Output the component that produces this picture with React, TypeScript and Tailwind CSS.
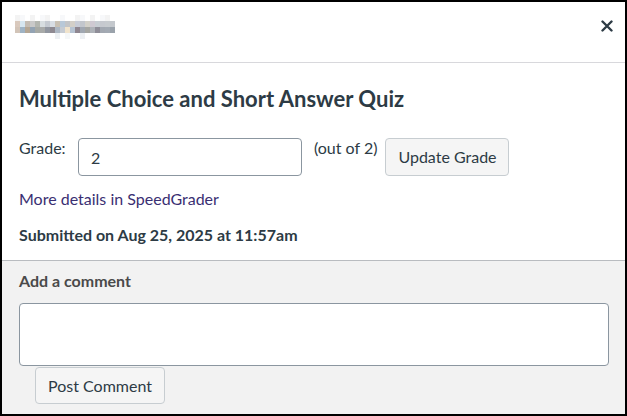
import React from "react";

const row1 = ["#d9c9bd","#d6e6f0","#c4bcb3","#c9c9c9","#b3b6b0","#d7dde0","#c5cad1","#d8dde4","#c8c0b4","#b8c8d8","#c2c4c7","#d3cfc8","#c8ccd6","#c2c6cc","#d2d0c8","#cfc9d2","#c8cdd3","#c6c9cf","#c7cbcf","#c4c8cd"];
const row2 = ["#d2c4b8","#9fb3c4","#b4a694","#93a3b3","#a7aaa5","#a8aaa9","#9196a0","#8e8991","#adb7c3","#c6cbd2","#f0e3cc","#b6c3d2","#8f8690","#a0a7b1","#a5a6a2","#aeb2b8","#8f8d98","#a2a8b1","#a3aab3","#9aa2ab"];

function Blur() {
  return (
    <div className="flex flex-col">
      <div className="flex h-[6px]">
        {row1.map((c, i) => (
          <div key={i} className="w-[5px] h-[6px]" style={{ backgroundColor: i % 4 === 1 ? "#f7f8fa" : i % 3 === 0 ? "#f3f3f3" : "#ffffff" }} />
        ))}
      </div>
      <div className="flex h-[6px]">
        {row1.map((c, i) => (
          <div key={i} className="w-[5px] h-[6px]" style={{ backgroundColor: c }} />
        ))}
      </div>
      <div className="flex h-[6px]">
        {row2.map((c, i) => (
          <div key={i} className="w-[5px] h-[6px]" style={{ backgroundColor: c }} />
        ))}
      </div>
      <div className="flex h-[6px]">
        {row2.map((_, i) => (
          <div key={i} className="w-[5px] h-[6px]" style={{ backgroundColor: i === 8 || i === 13 ? "#edf0f3" : i === 10 ? "#f5f7f8" : "#ffffff" }} />
        ))}
      </div>
    </div>
  );
}

export default function App() {
  return (
    <div
      className="w-[627px] h-[416px] border-2 border-black bg-white flex flex-col text-[#2d3b45] overflow-hidden"
      style={{ fontFamily: "Lato, 'Noto Sans', sans-serif" }}
    >
      <div className="h-[61px] flex items-start justify-between border-b border-[#d8d8dc] pl-[13px] pr-[12px] pt-[13px] shrink-0">
        <Blur />
        <svg width="12" height="12" viewBox="0 0 12 12" className="mt-[5px]">
          <path d="M1.5 1.5 L10.5 10.5 M10.5 1.5 L1.5 10.5" stroke="#2d3b45" strokeWidth="2.4" strokeLinecap="round" />
        </svg>
      </div>

      <div className="flex flex-col pl-[17px] pr-[17px] pt-[23px] pb-[15px] shrink-0">
        <h1 className="text-[22px] leading-[26px] font-bold">Multiple Choice and Short Answer Quiz</h1>
        <div className="flex items-start mt-[26px]">
          <span className="text-[16px] leading-[20px] w-[59px]">Grade:</span>
          <input
            defaultValue="2"
            className="w-[224px] h-[38px] border border-[#8b96a0] rounded-[4px] px-[12px] text-[16px] text-[#2d3b45] outline-none"
            style={{ fontFamily: "Lato, sans-serif" }}
          />
          <span className="text-[16px] leading-[20px] ml-[12px]">(out of 2)</span>
          <button className="ml-[8px] w-[124px] h-[38px] bg-[#f5f5f5] border border-[#c7cdd1] rounded-[4px] text-[16px] text-[#2d3b45]">
            Update Grade
          </button>
        </div>
        <a href="#" className="mt-[11px] text-[16px] leading-[24px] text-[#3a2f72] self-start">
          More details in SpeedGrader
        </a>
        <div className="mt-[14px] text-[16px] leading-[20px] font-bold">Submitted on Aug 25, 2025 at 11:57am</div>
      </div>

      <div className="flex-1 bg-[#f2f2f2] border-t border-[#b9bcc0] pl-[17px] pr-[16px] pt-[10px] flex flex-col">
        <div className="text-[16px] leading-[20px] font-bold text-[#4a4a4a]">Add a comment</div>
        <textarea className="mt-[12px] w-[590px] h-[63px] bg-white border border-[#8b96a0] rounded-[4px] resize-none outline-none" />
        <button className="mt-[1px] ml-[16px] self-start w-[130px] h-[37px] bg-[#f5f5f5] border border-[#c7cdd1] rounded-[4px] text-[16px] text-[#2d3b45]">
          Post Comment
        </button>
      </div>
    </div>
  );
}
